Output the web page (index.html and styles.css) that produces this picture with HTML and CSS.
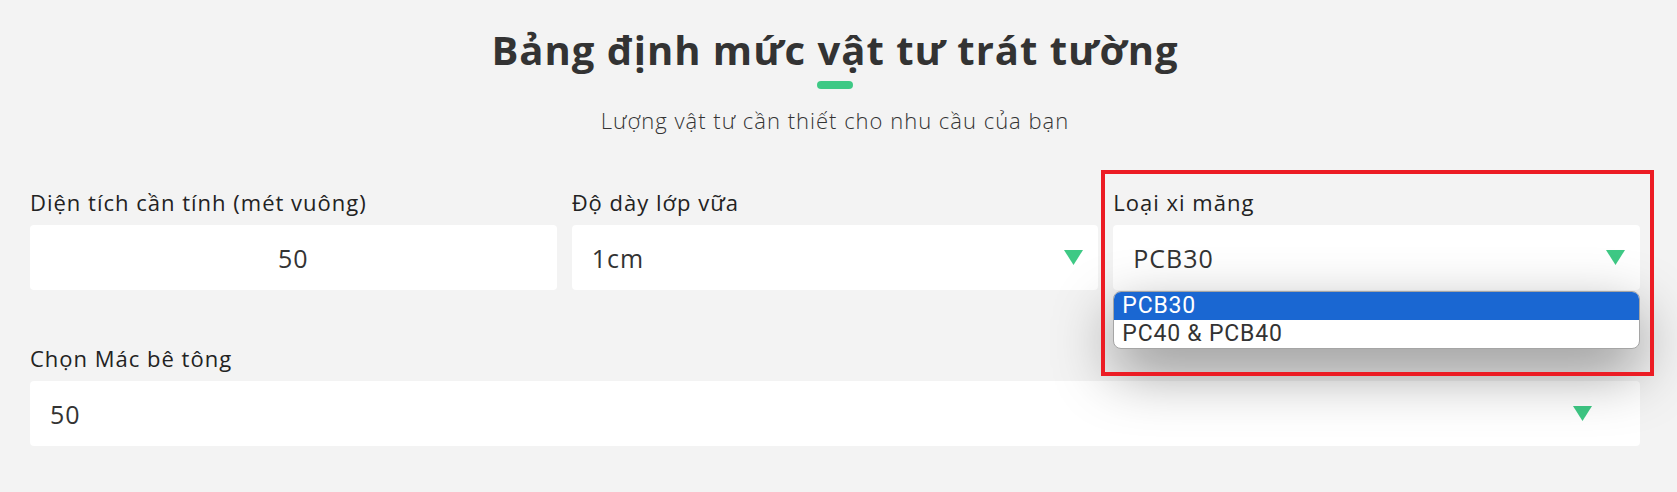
FILE: index.html
```html
<!DOCTYPE html>
<html lang="vi">

<head>
    <meta charset="UTF-8">
    <meta name="viewport" content="width=device-width, initial-scale=1.0">
    <title>Bảng định mức vật tư trát tường</title>
    <link rel="stylesheet" href="styles.css">
</head>

<body>

    <div class="container">
        <div class="heading">
            <h2>Bảng định mức vật tư trát tường</h2>
            <span class="heading-bar"></span>
            <p>Lượng vật tư cần thiết cho nhu cầu của bạn</p>
        </div>

        <div class="form-grid">
            <div class="field">
                <label for="dienTich">Diện tích cần tính (mét vuông)</label>
                <input id="dienTich" type="number" value="50">
            </div>

            <div class="field">
                <label for="doDay">Độ dày lớp vữa</label>
                <select id="doDay">
                    <option value="1">1cm</option>
                </select>
            </div>

            <!-- Ô đang mở danh sách chọn -->
            <div class="field field-open">
                <label for="ximang">Loại xi măng</label>
                <select id="ximang">
                    <option value="pcb30">PCB30</option>
                </select>
                <ul class="option-list">
                    <li class="selected">PCB30</li>
                    <li>PC40 &amp; PCB40</li>
                </ul>
                <div class="highlight"></div>
            </div>

            <div class="field field-wide">
                <label for="mac">Chọn Mác bê tông</label>
                <select id="mac">
                    <option value="50">50</option>
                </select>
            </div>
        </div>
    </div>

</body>

</html>
```

FILE: styles.css
```css
body {
    margin: 0;
    font-family: "Open Sans", "Noto Sans", sans-serif;
    background-color: #f3f3f3;
    color: #222;
}

.container {
    padding: 0 37px 0 30px;
}

.heading {
    display: flex;
    flex-direction: column;
    align-items: center;
    padding-top: 26px;
}

.heading h2 {
    margin: 0;
    font-size: 40px;
    line-height: 48px;
    font-weight: 700;
    letter-spacing: 1px;
    color: #333;
}

.heading-bar {
    display: block;
    width: 36px;
    height: 8px;
    margin-top: 7px;
    border-radius: 4px;
    background-color: #3ec985;
}

.heading p {
    margin: 17px 0 0;
    font-size: 22px;
    line-height: 28px;
    font-weight: 300;
    letter-spacing: 1px;
    color: #333;
}

.form-grid {
    display: grid;
    grid-template-columns: repeat(3, 1fr);
    column-gap: 15px;
    row-gap: 55px;
    margin-top: 55px;
}

.field {
    position: relative;
}

.field-wide {
    grid-column: 1 / -1;
}

.field label {
    display: block;
    margin-bottom: 10px;
    font-size: 22px;
    line-height: 26px;
    letter-spacing: 1px;
    color: #222;
}

.field input,
.field select {
    display: block;
    width: 100%;
    height: 65px;
    box-sizing: border-box;
    padding: 0 20px;
    border: none;
    border-radius: 4px;
    background-color: #fff;
    font-family: inherit;
    font-size: 25px;
    letter-spacing: 1px;
    color: #333;
    outline: none;
}

.field input {
    text-align: center;
    -moz-appearance: textfield;
}

.field input::-webkit-outer-spin-button,
.field input::-webkit-inner-spin-button {
    -webkit-appearance: none;
    margin: 0;
}

.field select {
    -webkit-appearance: none;
    appearance: none;
    background-image: url("data:image/svg+xml,%3Csvg xmlns='http://www.w3.org/2000/svg' width='19' height='15'%3E%3Cpath d='M0 0h19L9.5 15z' fill='%233ec985'/%3E%3C/svg%3E");
    background-repeat: no-repeat;
    background-position: right 3% center;
}

.option-list {
    position: absolute;
    top: 102px;
    left: 0;
    right: 0;
    z-index: 2;
    margin: 0;
    padding: 0;
    list-style: none;
    background-color: #fff;
    border: 1px solid #a5a5a5;
    border-radius: 8px;
    overflow: hidden;
    box-shadow: 0 22px 60px rgba(0, 0, 0, 0.42);
}

.option-list li {
    height: 28px;
    padding: 0 8px;
    font-family: Roboto, "Open Sans", sans-serif;
    font-size: 23px;
    line-height: 28px;
    letter-spacing: 0.8px;
    color: #333;
}

.option-list li.selected {
    background-color: #1a67d2;
    color: #fff;
}

.highlight {
    position: absolute;
    top: -19px;
    left: -12px;
    right: -14px;
    height: 206px;
    z-index: 3;
    box-sizing: border-box;
    border: 4px solid #ec1c24;
    pointer-events: none;
}
```
